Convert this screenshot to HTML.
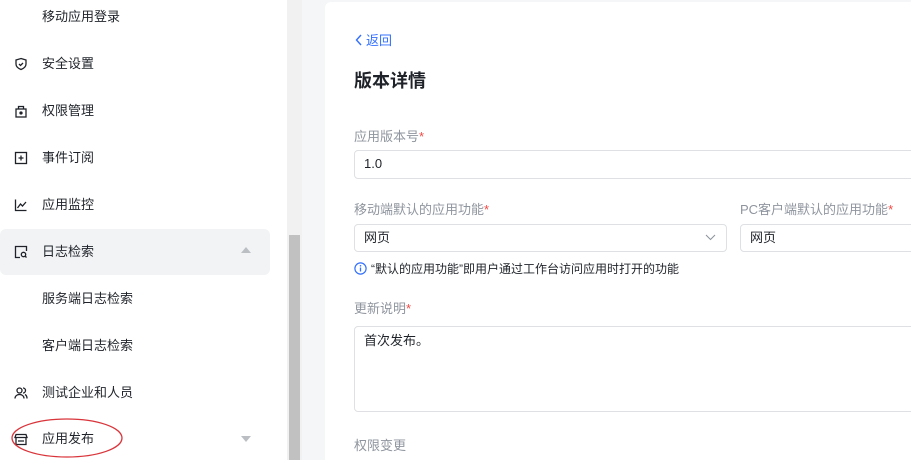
<!DOCTYPE html><html style="width:911px;height:460px;overflow:hidden"><head><meta charset="utf-8"><style>
*{margin:0;padding:0;box-sizing:border-box}
body{width:911px;height:460px;overflow:hidden;background:#f5f6f8;font-family:"Liberation Sans","Noto Sans CJK SC",sans-serif;position:relative;color:#1f2329}
.side{position:absolute;left:0;top:0;width:287px;height:460px;background:#fff}
.it{position:absolute;left:42px;font-size:13px;color:#1f2329;line-height:20px}
.ic{position:absolute;left:14px;width:14px;height:14px}
.hl{position:absolute;left:0;top:229px;width:270px;height:46px;background:#f2f3f5;border-radius:6px}
.track{position:absolute;left:287px;top:0;width:15px;height:460px;background:#f1f1f1}
.thumb{position:absolute;left:289px;top:235px;width:11px;height:225px;background:#c1c1c1}
.card{position:absolute;left:325px;top:2px;width:600px;height:458px;background:#fff;border-radius:6px 6px 0 0}
.m{position:absolute;font-size:13px;line-height:18px}
.lab{color:#8f959e}
.lab b{color:#f54a45;font-weight:normal}
.box{position:absolute;border:1px solid #dee0e3;border-radius:4px;background:#fff}
</style></head><body>
<div class="side">
<div class="hl"></div>
<div class="it" style="top:7px">移动应用登录</div>
<svg class="ic" style="top:57px" viewBox="0 0 14 14" fill="none" stroke="#1f2329" stroke-width="1.3"><path d="M7 1.5L12 3v4c0 3-2.5 4.5-5 5.5C4.5 11.5 2 10 2 7V3z"/><path d="M5 7l1.5 1.5L9 6"/></svg>
<div class="it" style="top:54px">安全设置</div>
<svg class="ic" style="top:104px" viewBox="0 0 14 14" fill="none" stroke="#1f2329" stroke-width="1.3"><rect x="2" y="5" width="10" height="8"/><path d="M4.5 5V2.5h5V5"/><circle cx="7" cy="9" r="1" fill="#1f2329"/></svg>
<div class="it" style="top:101px">权限管理</div>
<svg class="ic" style="top:151px" viewBox="0 0 14 14" fill="none" stroke="#1f2329" stroke-width="1.3"><rect x="1.5" y="1.5" width="11" height="11"/><path d="M7 4.5v5M4.5 7h5"/></svg>
<div class="it" style="top:148px">事件订阅</div>
<svg class="ic" style="top:198px" viewBox="0 0 14 14" fill="none" stroke="#1f2329" stroke-width="1.3"><path d="M1.5 1.5v11h11"/><path d="M3.5 10l3-4 2 2 3.5-4"/></svg>
<div class="it" style="top:195px">应用监控</div>
<svg class="ic" style="top:245px" viewBox="0 0 14 14" fill="none" stroke="#1f2329" stroke-width="1.3"><path d="M6 12.5H1.5v-11h11V6"/><circle cx="9.5" cy="9.5" r="2.2"/><path d="M11 11l1.5 1.5"/></svg>
<div class="it" style="top:242px">日志检索</div>
<svg style="position:absolute;left:241px;top:247px" width="10" height="6"><path d="M0 6L5 0l5 6z" fill="#bbbfc4"/></svg>
<div class="it" style="top:289px">服务端日志检索</div>
<div class="it" style="top:336px">客户端日志检索</div>
<svg class="ic" style="top:386px" viewBox="0 0 14 14" fill="none" stroke="#1f2329" stroke-width="1.3"><circle cx="5.5" cy="4.5" r="2.5"/><path d="M1 12.5c0-2.5 2-4 4.5-4s4.5 1.5 4.5 4"/><path d="M9 2a2.5 2.5 0 010 5M11 8.5c1.2.6 2 1.8 2 4"/></svg>
<div class="it" style="top:383px">测试企业和人员</div>
<svg class="ic" style="top:432px" viewBox="0 0 14 14" fill="none" stroke="#1f2329" stroke-width="1.3"><path d="M2 2.5h10l1 3H1z"/><path d="M2 5.5v7h10v-7M4 9h6"/></svg>
<div class="it" style="top:429px">应用发布</div>
<svg style="position:absolute;left:241px;top:436px" width="10" height="6"><path d="M0 0L5 6l5-6z" fill="#bbbfc4"/></svg>
<svg style="position:absolute;left:0;top:410px" width="130" height="50"><ellipse cx="67" cy="28" rx="55" ry="19" fill="none" stroke="#d9343a" stroke-width="1.3"/></svg>
</div>
<div class="track"></div><div class="thumb"></div>
<div class="card"></div>
<div class="m" style="left:355px;top:32px;color:#3370ff"><svg width="8" height="12" style="vertical-align:-1px;margin-right:3px"><path d="M6 1L1.5 6 6 11" fill="none" stroke="#3370ff" stroke-width="1.4"/></svg>返回</div>
<div class="m" style="left:354px;top:69px;font-size:18px;font-weight:bold;line-height:24px">版本详情</div>
<div class="m lab" style="left:354px;top:128px">应用版本号<b>*</b></div>
<div class="box" style="left:354px;top:150px;width:600px;height:29px"></div>
<div class="m" style="left:364px;top:155px">1.0</div>
<div class="m lab" style="left:354px;top:201px">移动端默认的应用功能<b>*</b></div>
<div class="m lab" style="left:740px;top:201px">PC客户端默认的应用功能<b>*</b></div>
<div class="box" style="left:354px;top:224px;width:373px;height:28px"></div>
<svg style="position:absolute;left:705px;top:234px" width="11" height="7"><path d="M1 1l4.5 4.5L10 1" fill="none" stroke="#8f959e" stroke-width="1.1"/></svg>
<div class="box" style="left:740px;top:224px;width:200px;height:28px"></div>
<div class="m" style="left:364px;top:229px">网页</div>
<div class="m" style="left:750px;top:229px">网页</div>
<svg style="position:absolute;left:354px;top:262px" width="13" height="13"><circle cx="6.5" cy="6.5" r="5.6" fill="none" stroke="#3370ff" stroke-width="1.2"/><path d="M6.5 5.5v4" stroke="#3370ff" stroke-width="1.3"/><circle cx="6.5" cy="3.8" r=".8" fill="#3370ff"/></svg>
<div class="m" style="left:371px;top:260px;font-size:12px">“默认的应用功能”即用户通过工作台访问应用时打开的功能</div>
<div class="m lab" style="left:354px;top:300px">更新说明<b>*</b></div>
<div class="box" style="left:354px;top:326px;width:600px;height:86px"></div>
<div class="m" style="left:364px;top:332px">首次发布。</div>
<div class="m lab" style="left:354px;top:437px">权限变更</div>
</body></html>
